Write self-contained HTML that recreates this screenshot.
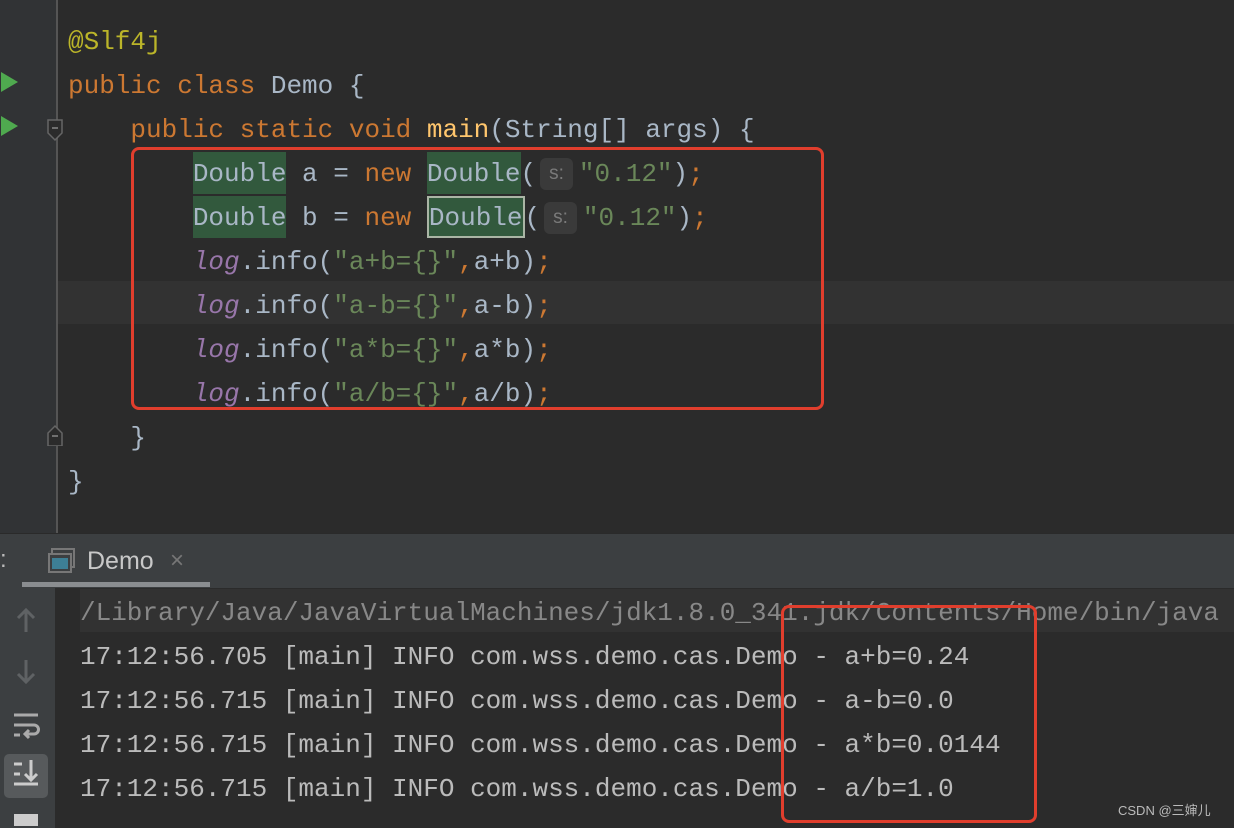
<!DOCTYPE html>
<html><head><meta charset="utf-8"><style>
body{margin:0;width:1234px;height:828px;overflow:hidden;background:#2b2b2b;position:relative;font-family:"Liberation Mono",monospace;}
.abs{position:absolute}
.code{position:absolute;left:68px;top:20px;font-size:26px;line-height:44px;color:#a9b7c6;white-space:pre;}
.k{color:#cc7832}.an{color:#bbb529}.s{color:#6a8759}.lg{color:#9876aa;font-style:italic}.m{color:#ffc66d}
.hl{background:#32593d;display:inline-block;height:42px;line-height:44px;vertical-align:top;box-sizing:border-box}
.hint{display:inline-block;background:#3a3a3a;color:#7a7a7a;font-family:"Liberation Sans",sans-serif;font-size:19px;line-height:32px;height:32px;border-radius:6px;padding:0 9px;vertical-align:top;margin-top:6px;margin-right:6px;margin-left:4px}
.con{position:absolute;left:80px;top:591px;font-size:26px;line-height:44px;color:#bbbbbb;white-space:pre;}
</style></head><body>
<div class="abs" style="left:0;top:0;width:56px;height:533px;background:#313335"></div>
<div class="abs" style="left:56px;top:0;width:2px;height:533px;background:#555"></div>
<div class="abs" style="left:58px;top:281px;width:1176px;height:43px;background:#323232"></div>
<svg class="abs" style="left:0;top:70px" width="20" height="70"><polygon points="1,2 18,12 1,22" fill="#4faa4f"/><polygon points="1,46 18,56 1,66" fill="#4faa4f"/></svg>
<svg class="abs" style="left:46px;top:116px" width="20" height="330"><path d="M2,4 H16 V17 L9,24 L2,17 Z" fill="#2b2b2b" stroke="#666" stroke-width="1.5"/><line x1="6" y1="12" x2="12" y2="12" stroke="#888" stroke-width="1.5"/><path d="M2,330 V317 L9,310 L16,317 V330 Z" fill="#2b2b2b" stroke="#666" stroke-width="1.5"/><line x1="6" y1="320" x2="12" y2="320" stroke="#888" stroke-width="1.5"/></svg>
<div class="code"><span class="an">@Slf4j</span>
<span class="k">public class </span>Demo {
    <span class="k">public static void </span><span class="m">main</span>(String[] args) {
        <span class="hl">Double</span> a = <span class="k">new </span><span class="hl">Double</span>(<span class="hint">s:</span><span class="s">"0.12"</span>)<span class="k">;</span>
        <span class="hl">Double</span> b = <span class="k">new </span><span class="hl" style="border:2px solid #aab5a5;line-height:40px">Double</span>(<span class="hint">s:</span><span class="s">"0.12"</span>)<span class="k">;</span>
        <span class="lg">log</span>.info(<span class="s">"a+b={}"</span><span class="k">,</span>a+b)<span class="k">;</span>
        <span class="lg">log</span>.info(<span class="s">"a-b={}"</span><span class="k">,</span>a-b)<span class="k">;</span>
        <span class="lg">log</span>.info(<span class="s">"a*b={}"</span><span class="k">,</span>a*b)<span class="k">;</span>
        <span class="lg">log</span>.info(<span class="s">"a/b={}"</span><span class="k">,</span>a/b)<span class="k">;</span>
    }
}</div>
<div class="abs" style="left:131px;top:147px;width:687px;height:257px;border:3px solid #e03e2d;border-radius:8px"></div>
<div class="abs" style="left:0;top:533px;width:1234px;height:55px;background:#3c3f41;border-top:1px solid #2a2a2a;box-sizing:border-box"></div>
<div class="abs" style="left:0;top:546px;font-family:'Liberation Sans',sans-serif;font-size:24px;color:#bbb">:</div>
<svg class="abs" style="left:47px;top:548px" width="30" height="28"><rect x="5" y="1" width="22" height="18" fill="none" stroke="#777" stroke-width="2"/><rect x="2" y="6" width="22" height="18" fill="#3c3f41" stroke="#777" stroke-width="2"/><rect x="5" y="10" width="16" height="11" fill="#3d7f95"/></svg>
<div class="abs" style="left:87px;top:547px;font-family:'Liberation Sans',sans-serif;font-size:25px;color:#c8c8c8">Demo</div>
<div class="abs" style="left:170px;top:547px;font-family:'Liberation Sans',sans-serif;font-size:24px;color:#777">×</div>
<div class="abs" style="left:22px;top:582px;width:188px;height:5px;background:#8a8d90"></div>
<div class="abs" style="left:0;top:588px;width:55px;height:240px;background:#3c3f41"></div>
<svg class="abs" style="left:0;top:588px" width="55" height="240"><g stroke="#5f6264" stroke-width="3" fill="none"><path d="M26,44 V22 M18,30 L26,22 L34,30"/><path d="M26,72 V94 M18,86 L26,94 L34,86"/></g><g stroke="#aaa" stroke-width="3" fill="none"><path d="M14,127 H38 M14,137 H34 a4,4 0 0 1 0,9 H26 M29,142 L25,146 L29,150 M14,147 H20"/></g><rect x="4" y="166" width="44" height="44" rx="5" fill="#575a5c"/><g stroke="#ccc" stroke-width="3" fill="none"><path d="M14,176 H22 M14,186 H20 M14,196 H38 M31,172 V192 M25,186 L31,192 L37,186"/></g><rect x="14" y="226" width="24" height="12" fill="#ccc"/></svg>
<div class="abs" style="left:80px;top:589px;width:1154px;height:43px;background:#323232"></div>
<div class="con"><span style="color:#888">/Library/Java/JavaVirtualMachines/jdk1.8.0_341.jdk/Contents/Home/bin/java</span>
17:12:56.705 [main] INFO com.wss.demo.cas.Demo - a+b=0.24
17:12:56.715 [main] INFO com.wss.demo.cas.Demo - a-b=0.0
17:12:56.715 [main] INFO com.wss.demo.cas.Demo - a*b=0.0144
17:12:56.715 [main] INFO com.wss.demo.cas.Demo - a/b=1.0</div>
<div class="abs" style="left:781px;top:605px;width:250px;height:212px;border:3px solid #e03e2d;border-radius:8px"></div>
<div class="abs" style="left:1118px;top:800px;font-family:'Liberation Sans','Noto Sans CJK SC',sans-serif;font-size:13px;color:#bbb">CSDN @三婶儿</div>
</body></html>
